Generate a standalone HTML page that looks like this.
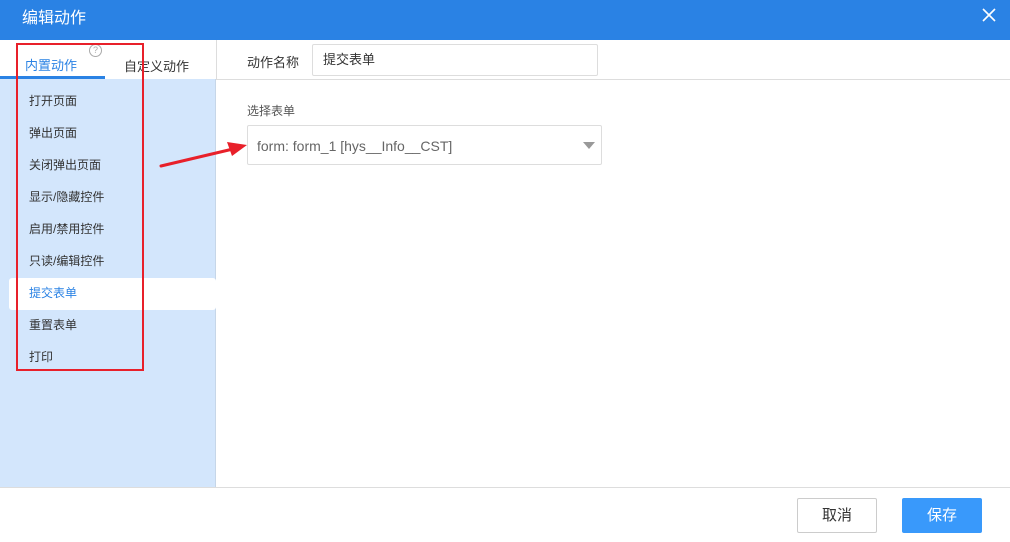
<!DOCTYPE html>
<html><head><meta charset="utf-8"><style>
*{margin:0;padding:0;box-sizing:border-box}
body{width:1010px;height:542px;position:relative;background:#fff;font-family:"Liberation Sans","Noto Sans CJK SC",sans-serif;overflow:hidden}
.a{position:absolute}
.hd{left:0;top:0;width:1010px;height:40px;background:#2a82e4;color:#fff;font-size:16px;line-height:38px;padding-left:22px}
.side{left:0;top:79px;width:216px;height:408px;background:#d3e6fc;border-right:1px solid #c6d6e8}
.it{position:absolute;left:29px;font-size:12px;color:#333;line-height:16px}
</style></head><body>
<div class="a hd">编辑动作</div>
<svg class="a" style="left:982px;top:8px" width="14" height="14"><path d="M1 1L13 13M13 1L1 13" stroke="#fff" stroke-width="1.6"/></svg>
<div class="a" style="left:0;top:79px;width:1010px;height:1px;background:#ddd"></div>
<div class="a" style="left:216px;top:40px;width:1px;height:40px;background:#ddd"></div>
<div class="a" style="left:25px;top:55px;font-size:13px;color:#2a82e4">内置动作</div>
<div class="a" style="left:0;top:76px;width:105px;height:3px;background:#2a82e4"></div>
<div class="a" style="left:124px;top:56px;font-size:13px;color:#333">自定义动作</div>
<div class="a" style="left:89px;top:44px;width:13px;height:13px;border:1px solid #aaa;border-radius:50%;font-size:9px;color:#aaa;text-align:center;line-height:11px">?</div>
<div class="a side">
<div class="a" style="left:9px;top:199px;width:207px;height:32px;background:#fff;border-radius:3px"></div>
<div class="it" style="top:14px">打开页面</div>
<div class="it" style="top:46px">弹出页面</div>
<div class="it" style="top:78px">关闭弹出页面</div>
<div class="it" style="top:110px">显示/隐藏控件</div>
<div class="it" style="top:142px">启用/禁用控件</div>
<div class="it" style="top:174px">只读/编辑控件</div>
<div class="it" style="top:206px;color:#2a82e4">提交表单</div>
<div class="it" style="top:238px">重置表单</div>
<div class="it" style="top:270px">打印</div>
</div>
<div class="a" style="left:16px;top:43px;width:128px;height:328px;border:2px solid #e8202a"></div>
<div class="a" style="left:247px;top:52px;font-size:13px;color:#333">动作名称</div>
<div class="a" style="left:312px;top:44px;width:286px;height:32px;border:1px solid #ddd;border-radius:2px;font-size:13px;color:#333;line-height:30px;padding-left:10px">提交表单</div>
<div class="a" style="left:247px;top:102px;font-size:12px;color:#555">选择表单</div>
<div class="a" style="left:247px;top:125px;width:355px;height:40px;border:1px solid #ddd;border-radius:2px;font-size:14px;color:#666;line-height:40px;padding-left:9px">form: form_1 [hys__Info__CST]</div>
<svg class="a" style="left:583px;top:142px" width="12" height="7"><path d="M0 0H12L6 7Z" fill="#999"/></svg>
<svg class="a" style="left:155px;top:138px" width="95" height="35"><path d="M6 28L78 11" stroke="#e8202a" stroke-width="3" stroke-linecap="round"/><path d="M92 7L72 4L77 18Z" fill="#e8202a"/></svg>
<div class="a" style="left:0;top:487px;width:1010px;height:1px;background:#ddd"></div>
<div class="a" style="left:797px;top:498px;width:80px;height:35px;border:1px solid #ccc;border-radius:2px;text-align:center;line-height:33px;font-size:15px;color:#333">取消</div>
<div class="a" style="left:902px;top:498px;width:80px;height:35px;background:#3999fb;border-radius:2px;text-align:center;line-height:35px;font-size:15px;color:#fff">保存</div>
</body></html>
